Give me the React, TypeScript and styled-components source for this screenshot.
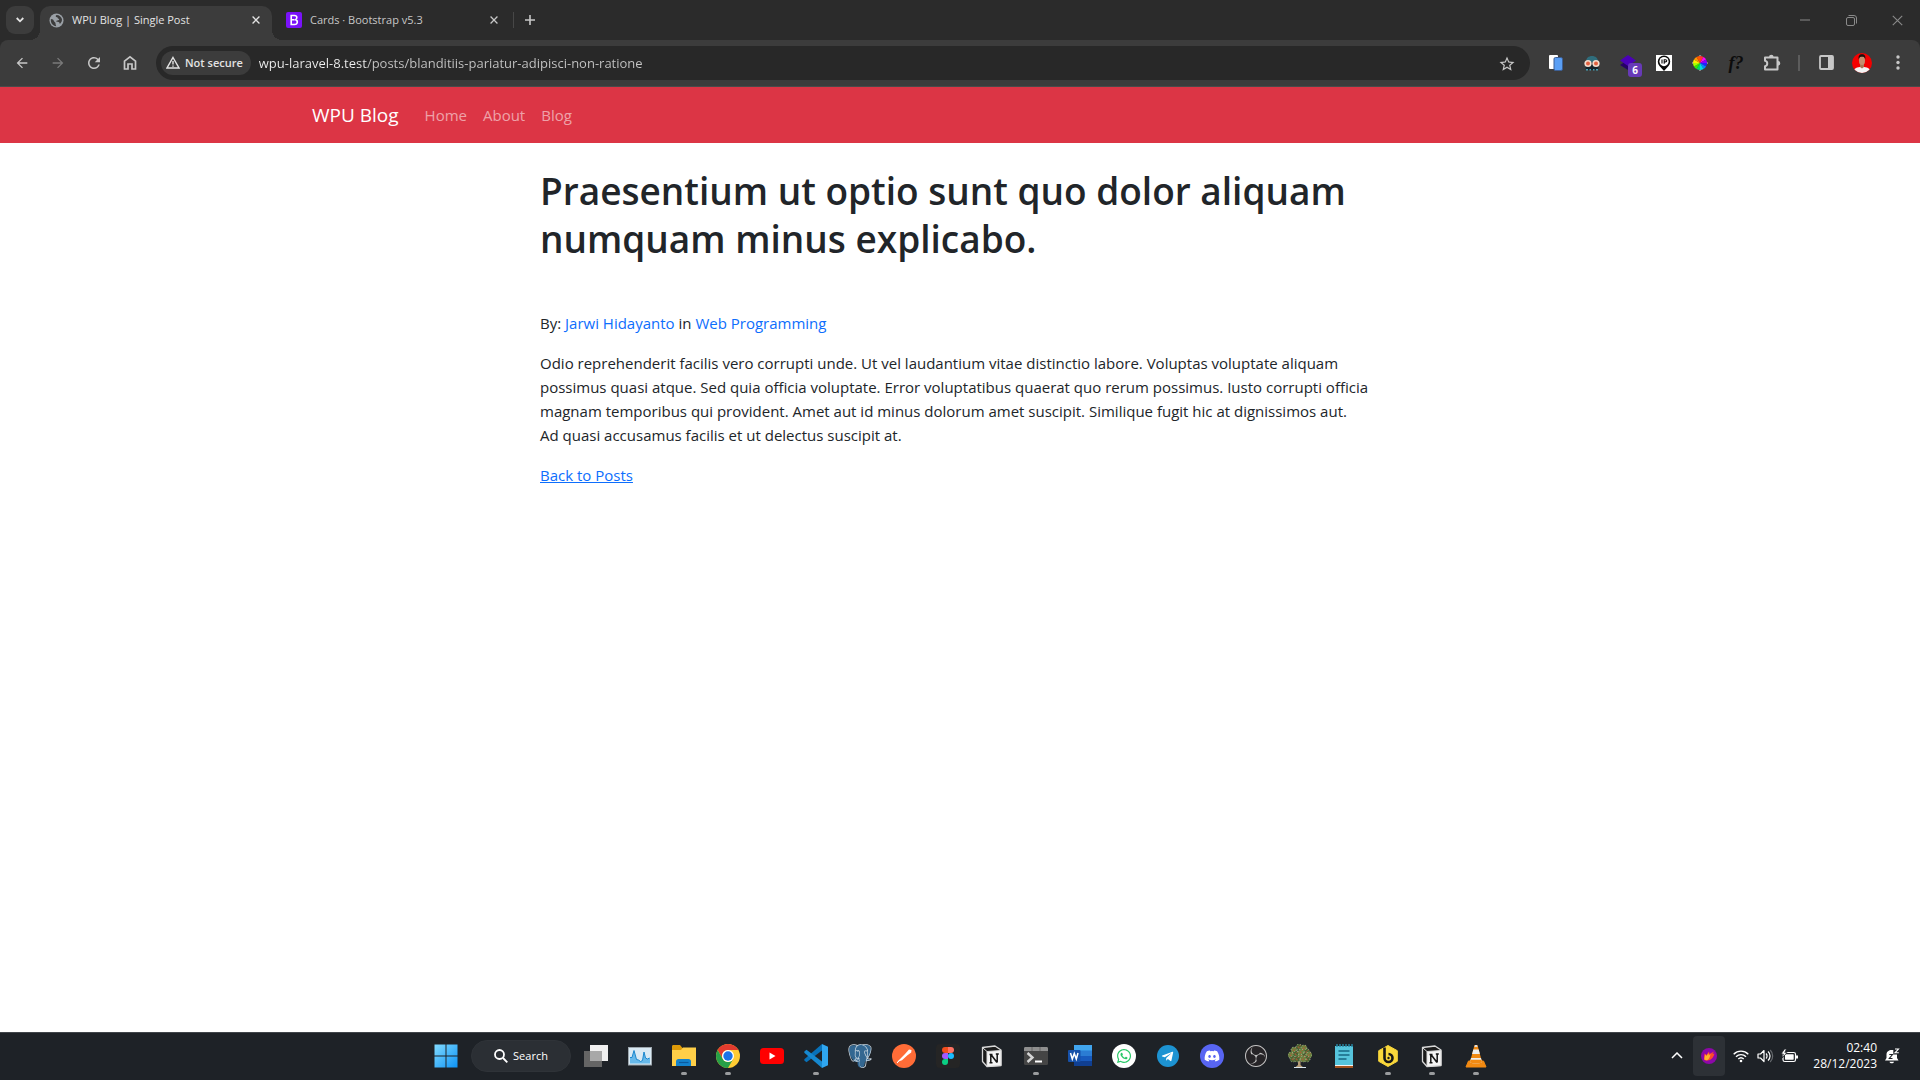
import React from "react";
import styled, { createGlobalStyle } from "styled-components";
import { SiPostgresql, SiObsstudio } from "react-icons/si";
import { FaDiscord, FaWhatsapp, FaTelegramPlane } from "react-icons/fa";
import { MdOutlineStarBorder, MdArrowBack, MdArrowForward, MdRefresh } from "react-icons/md";

const ui = `"Open Sans", "Noto Sans", sans-serif`;

const GlobalStyle = createGlobalStyle`
  *, *::before, *::after { box-sizing: border-box; }
  body { margin: 0; background: #fff; font-family: ${ui}; }
  button { font: inherit; color: inherit; border: 0; padding: 0; background: none; }
  svg { display: block; flex: none; }
`;

const Screen = styled.div`
  display: flex;
  flex-direction: column;
  min-height: 100vh;
`;

/* ---------- browser chrome ---------- */

const Browser = styled.header`
  background: #2b2b2b;
  color: #e3e3e3;
`;

const TabStrip = styled.div`
  display: flex;
  align-items: center;
  height: 40px;
  padding-left: 6px;
`;

const TabSearch = styled.button`
  display: grid;
  place-items: center;
  width: 28px;
  height: 28px;
  border-radius: 9px;
  background: #3c3c3c;
`;

const Tab = styled.div<{ $active?: boolean }>`
  position: relative;
  display: flex;
  align-items: center;
  align-self: flex-end;
  width: ${(p) => (p.$active ? 232 : 238)}px;
  height: 34px;
  margin-left: ${(p) => (p.$active ? 6 : 0)}px;
  padding: 0 8px 6px ${(p) => (p.$active ? 9 : 14)}px;
  border-radius: 10px 10px 0 0;
  background: ${(p) => (p.$active ? "#3c3c3c" : "transparent")};
  color: ${(p) => (p.$active ? "#e3e3e3" : "#c7c7c7")};
  &::before, &::after {
    content: "";
    display: ${(p) => (p.$active ? "block" : "none")};
    position: absolute;
    bottom: 0;
    width: 10px;
    height: 10px;
  }
  &::before {
    right: 100%;
    background: radial-gradient(circle at 0 0, transparent 10px, #3c3c3c 10px);
  }
  &::after {
    left: 100%;
    background: radial-gradient(circle at 100% 0, transparent 10px, #3c3c3c 10px);
  }
`;

const TabLabel = styled.button`
  display: flex;
  flex: 1;
  align-items: center;
  gap: 8px;
  font-size: 11px;
  line-height: 16px;
  white-space: nowrap;
`;

const SmallButton = styled.button`
  display: grid;
  place-items: center;
  width: 16px;
  height: 16px;
`;

const TabDivider = styled.span`
  width: 1px;
  height: 16px;
  margin: 0 8px 0 3px;
  background: #474747;
`;

const WindowControls = styled.div`
  display: flex;
  align-self: stretch;
  margin-left: auto;
  color: #8a8a8a;
`;

const WindowButton = styled.button`
  display: grid;
  place-items: center;
  width: 46px;
`;

const Toolbar = styled.div`
  display: flex;
  align-items: center;
  height: 47px;
  padding: 0 4px 1px;
  border-bottom: 1px solid #4a4a4a;
  border-radius: 8px 8px 0 0;
  background: #3c3c3c;
`;

const ToolButton = styled.button`
  position: relative;
  display: grid;
  place-items: center;
  width: 36px;
  height: 34px;
  color: #c7c7c7;
  &:disabled { color: #7a7a7a; }
`;

const Omnibox = styled.form`
  display: flex;
  flex: 1;
  align-items: center;
  gap: 8px;
  height: 34px;
  margin: 0 8px;
  padding: 0 16px 0 5px;
  border-radius: 17px;
  background: #282828;
`;

const SecurityChip = styled.button`
  display: flex;
  align-items: center;
  gap: 5px;
  height: 24px;
  padding: 0 8px 0 5px;
  border-radius: 12px;
  background: #3c3c3c;
  color: #e3e3e3;
  font-size: 11px;
  font-weight: 600;
  white-space: nowrap;
`;

const Address = styled.input`
  flex: 1;
  min-width: 0;
  height: 24px;
  padding: 0;
  border: 0;
  outline: 0;
  background: linear-gradient(to right, #f0f0f0 108px, #c7c7c7 108px);
  background-clip: text;
  -webkit-text-fill-color: transparent;
  color: #e3e3e3;
  font-family: ${ui};
  font-size: 13px;
`;

const Count = styled.span`
  position: absolute;
  right: 4px;
  bottom: 3px;
  width: 14px;
  height: 14px;
  border-radius: 3px;
  background: #673ab7;
  color: #fff;
  font-size: 10px;
  font-weight: 700;
  line-height: 14px;
  text-align: center;
`;

const FunctionMark = styled.span`
  color: #0c0c0c;
  font-family: "Liberation Serif", serif;
  font-size: 18px;
  font-style: italic;
  font-weight: 700;
  line-height: 20px;
`;

const ToolDivider = styled.span`
  width: 2px;
  height: 16px;
  margin: 0 8px;
  background: #5c5c5c;
`;

/* ---------- blog page ---------- */

const SiteNav = styled.nav`
  background: #dc3545;
`;

const Container = styled.div`
  display: flex;
  align-items: center;
  max-width: 1320px;
  height: 56px;
  margin: 0 auto;
  padding: 0 12px;
`;

const Brand = styled.a`
  margin-right: 18px;
  color: #fff;
  font-size: 19px;
  line-height: 30px;
  text-decoration: none;
`;

const NavLink = styled.a`
  padding: 8px;
  color: rgba(255, 255, 255, 0.55);
  font-size: 15px;
  line-height: 24px;
  text-decoration: none;
`;

const Article = styled.main`
  flex: 1;
  width: 100%;
  max-width: 840px;
  margin: 0 auto;
  padding-top: 24px;
  color: #212529;
  font-size: 15px;
  line-height: 24px;
`;

const Title = styled.h1`
  margin: 0 0 48px;
  font-size: 37px;
  font-weight: 600;
  line-height: 48px;
`;

const Paragraph = styled.p`
  margin: 0 0 16px;
`;

const Link = styled.a<{ $plain?: boolean }>`
  color: #0d6efd;
  text-decoration: ${(p) => (p.$plain ? "none" : "underline")};
`;

/* ---------- taskbar ---------- */

const Taskbar = styled.footer`
  display: grid;
  grid-template-columns: 1fr auto 1fr;
  align-items: center;
  height: 48px;
  padding: 0 0 2px 2px;
  border-top: 1px solid #41454a;
  background: #1e2227;
  color: #fff;
`;

const Apps = styled.div`
  display: flex;
  grid-column: 2;
  align-items: center;
`;

const AppButton = styled.button<{ $running?: boolean }>`
  position: relative;
  display: grid;
  place-items: center;
  width: 44px;
  height: 44px;
  &::after {
    content: "";
    display: ${(p) => (p.$running ? "block" : "none")};
    position: absolute;
    bottom: 3px;
    left: 19px;
    width: 6px;
    height: 3px;
    border-radius: 2px;
    background: #9a9c9e;
  }
`;

const SearchButton = styled.button`
  display: flex;
  align-items: center;
  justify-content: center;
  gap: 5px;
  width: 100px;
  height: 32px;
  margin: 0 3px;
  border: 1px solid #2f3338;
  border-radius: 16px;
  background: #2b2f34;
  font-size: 11px;
`;

const Tray = styled.div`
  display: flex;
  grid-column: 3;
  align-items: center;
  justify-content: flex-end;
  padding-right: 20px;
`;

const TrayButton = styled.button<{ $width: number; $lit?: boolean }>`
  display: grid;
  place-items: center;
  width: ${(p) => p.$width}px;
  height: 40px;
  border-radius: 4px;
  background: ${(p) => (p.$lit ? "#2d3136" : "transparent")};
`;

const Clock = styled.button`
  width: 72px;
  margin-right: 7px;
  font-size: 12px;
  line-height: 16px;
  text-align: right;
  white-space: nowrap;
`;

/* ---------- drawings ---------- */

const Cross = ({ size = 8, stroke = 1.6 }) => (
  <svg width={size} height={size} viewBox="0 0 10 10" stroke="currentColor" strokeWidth={stroke} fill="none">
    <path d="M.7 .7 9.3 9.3M9.3 .7 .7 9.3" />
  </svg>
);

const Globe = () => (
  <svg width="15" height="15" viewBox="0 0 16 16">
    <circle cx="8" cy="8" r="7.5" fill="#9aa0a6" />
    <path d="M2 6.500c2 .2 3 .8 3.200 2 .2 1 1.600 1 1.700 2.200.1 1 .2 2.400.8 3.400C4 14 1.500 10.500 2 6.500zM8 2c-1.500.8-1 2.200.6 2.400 1 .2.4 1.400 1.600 1.600 1 .1.8 1.400-.4 1.600-1.400.2-2.400.5-2 1.400.5.8 2.200.3 3 .9.7.6.1 1.600 1 1.500C13.500 10 14 8.500 13.800 6.500 13 4 11 2 8 2z" fill="#3c3c3c" />
  </svg>
);

const BootstrapLogo = () => (
  <svg width="16" height="16" viewBox="0 0 16 16">
    <rect width="16" height="16" rx="2" fill="#7a12fa" />
    <path d="M5.200 3.500h3.300c3 0 3 3.600.7 4.200 3 .4 2.800 4.800-.7 4.800H5.200zM5.200 7.700h3.500" fill="none" stroke="#fff" strokeWidth="1.600" />
  </svg>
);

const Home = () => (
  <svg width="14" height="16" viewBox="0 0 14 16" fill="none" stroke="currentColor" strokeWidth="1.700">
    <path d="M1.500 6.200 7 1.800l5.500 4.400V14H9V9H5v5H1.500z" />
  </svg>
);

const Warning = () => (
  <svg width="14" height="13" viewBox="0 0 14 13" fill="none" stroke="currentColor" strokeWidth="1.400">
    <path d="M7 1.500 13 12H1zM7 5v3.500M7 9.400v1.300" />
  </svg>
);

const Puzzle = () => (
  <svg width="18" height="18" viewBox="0 0 18 18">
    <path d="M2 3.500h12.500V15.500H2v-3.300c3-.4 3-5 0-5.400z" fill="none" stroke="currentColor" strokeWidth="2" strokeLinejoin="round" />
    <path d="M6 3a2.300 2.300 0 0 1 4.600 0zM15 7a2.300 2.300 0 0 1 0 4.600z" fill="currentColor" />
  </svg>
);

const Devices = () => (
  <svg width="14" height="16" viewBox="0 0 14 16">
    <rect x="0" y="0" width="9" height="14" rx="1" fill="#fff" />
    <rect x="5" y="2.500" width="8.500" height="13" rx="1.500" fill="#5a9ff5" stroke="#3c5f95" />
  </svg>
);

const Spy = () => (
  <svg width="16" height="16" viewBox="0 0 16 16">
    <path d="M2 7C2 3 4.500 1 8 1s6 2 6 6z" fill="#2f6d7c" />
    <path d="M1 10h14l-1 5H2z" fill="#15242b" />
    <path d="M2 14h2v1.500H2zM5.500 14H7v1.500H5.500zM9 14h1.500v1.500H9zM12 14h2v1.500h-2z" fill="#47a0b4" />
    <circle cx="4" cy="8.500" r="3.600" fill="#f3ddcf" />
    <circle cx="12" cy="8.500" r="3.600" fill="#f3ddcf" />
    <circle cx="4" cy="8.500" r="2" fill="#e2613f" />
    <circle cx="12" cy="8.500" r="2" fill="#e2613f" />
  </svg>
);

const Layers = () => (
  <svg width="18" height="16" viewBox="0 0 18 16">
    <path d="M1 10 9 5l8 5-8 5z" fill="#260066" />
    <path d="M1 5.500 9 0l8 5.500L9 11z" fill="#4b00b8" />
  </svg>
);

const PinIp = () => (
  <svg width="16" height="16" viewBox="0 0 16 16">
    <rect width="16" height="16" fill="#fff" />
    <path d="M8 16 3.500 11a6.200 6.200 0 1 1 9 0z" fill="#0a0a0a" />
    <circle cx="8" cy="6.600" r="4.600" fill="#fff" />
    <path d="M6 4.500v4M8.200 8.700V4.700h1.300c1.700 0 1.700 2.200 0 2.200H8.200" fill="none" stroke="#0a0a0a" strokeWidth="1.100" />
  </svg>
);

const wheel = ["#f33", "#f0f", "#80f", "#22f", "#08f", "#0dd", "#0d6", "#3e0", "#af0", "#fe0", "#f90", "#f50"];
const ColorWheel = () => (
  <svg width="16" height="16" viewBox="-8 -8 16 16">
    <circle r="7.400" fill="none" stroke="#aaa" strokeWidth="1" strokeDasharray="2 9.600" strokeDashoffset="1" />
    {wheel.map((fill, i) => (
      <path key={fill} d="M0 0 0-7A7 7 0 0 1 3.500-6.060z" fill={fill} transform={`rotate(${i * 30})`} />
    ))}
  </svg>
);

const SidePanel = () => (
  <svg width="15" height="15" viewBox="0 0 15 15">
    <rect x="1" y="1" width="13" height="13" rx="1" fill="none" stroke="currentColor" strokeWidth="1.800" />
    <path d="M9 1h5v13H9z" fill="currentColor" />
  </svg>
);

const Avatar = () => (
  <svg width="20" height="20" viewBox="0 0 20 20">
    <clipPath id="face"><circle cx="10" cy="10" r="10" /></clipPath>
    <g clipPath="url(#face)">
      <rect width="20" height="20" fill="#f40000" />
      <path d="M1 20c0-4 3-5.500 7-6h4c4 .5 7 2 7 6z" fill="#f4f4f4" />
      <path d="M8 10h4v4l-2 1.500L8 14z" fill="#a87554" />
      <ellipse cx="10" cy="7.500" rx="3" ry="4.600" fill="#c49070" />
      <path d="M6.800 6.500C6 3 7.500 1.200 10 1.200s4 1.800 3.200 5.300c-.6-2.300-1.200-2.700-3.200-2.700s-2.600.4-3.200 2.700z" fill="#17120f" />
    </g>
  </svg>
);

const Dots = () => (
  <svg width="4" height="15" viewBox="0 0 4 15" fill="currentColor">
    <circle cx="2" cy="2" r="1.700" /><circle cx="2" cy="7.500" r="1.700" /><circle cx="2" cy="13" r="1.700" />
  </svg>
);

const Icon = ({ children }: { children: React.ReactNode }) => (
  <svg width="24" height="24" viewBox="0 0 24 24">{children}</svg>
);

const Windows = () => (
  <Icon>
    <defs>
      <linearGradient id="win" x1="0" y1="0" x2="24" y2="24" gradientUnits="userSpaceOnUse">
        <stop stopColor="#84dcff" /><stop offset="1" stopColor="#0a91f5" />
      </linearGradient>
    </defs>
    <path d="M.5 .5h11v11H.5zM12.500 .5h11v11h-11zM.5 12.500h11v11H.5zM12.500 12.500h11v11h-11z" fill="url(#win)" />
  </Icon>
);

const TaskView = () => (
  <Icon>
    <rect x="6" y="1" width="18" height="16" fill="#f0f0f0" />
    <rect x="0" y="7" width="18" height="16" fill="#656565" />
    <path d="M6 7h12v10H6z" fill="#a8a8a8" />
  </Icon>
);

const Monitor = () => (
  <Icon>
    <rect x=".5" y="3.500" width="23" height="17.500" fill="#d9eaf4" stroke="#9da7ae" />
    <path d="M2 19.500v-6h2l2-7 2.500 9 2 .5 2 1.500 2-1 1.500-8.500 1.500 6 2 1 2-1h.5v5.500z" fill="#67b9ea" />
    <path d="M2 13.500h2l2-7 2.500 9 2 .5 2 1.500 2-1 1.500-8.500 1.500 6 2 1 2-1" fill="none" stroke="#1987ce" />
  </Icon>
);

const Folder = () => (
  <Icon>
    <path d="M0 2.500C0 1.500.6 1 1.500 1H8l2.500 3H24v5H0z" fill="#dd9a08" />
    <path d="M0 6h9l2-2.500h13v18.500H0z" fill="#ffcf48" />
    <path d="M4 22v-4.500c0-1.500 1-2.500 2.500-2.500h10c1.500 0 2.500 1 2.500 2.500V22z" fill="#1382cc" />
    <path d="M7 18.500h9.500" stroke="#0a5a9e" strokeWidth="1.200" />
  </Icon>
);

const Chrome = () => (
  <Icon>
    <circle cx="12" cy="12" r="12" fill="#fc3" />
    <path d="M1.610 6A12 12 0 0 1 22.390 6H12a6 6 0 0 0-5.200 9z" fill="#e33b2e" />
    <path d="M1.610 6A12 12 0 0 0 12 24l5.200-9A6 6 0 0 1 6.800 15z" fill="#26a047" />
    <circle cx="12" cy="12" r="6" fill="#fff" />
    <circle cx="12" cy="12" r="4.700" fill="#1a73e8" />
  </Icon>
);

const YouTube = () => (
  <Icon>
    <rect y="4" width="24" height="16" rx="3.500" fill="#f00" />
    <path d="M9.500 8.500v7l6-3.500z" fill="#fff" />
  </Icon>
);

const VsCode = () => (
  <Icon>
    <path d="m18 0 0 6.500L2.500 18.200.3 16.500v-1.200z" fill="#0871b8" />
    <path d="M18 24V17.500L2.500 5.800.3 7.500v1.200z" fill="#1688cf" />
    <path d="m18 0 6 2.700v18.600L18 24z" fill="#2fa6f0" />
  </Icon>
);

const Postgres = () => (
  <Icon>
    <path d="M1 6C1 2 4 .8 8 1.500 11 .3 14 .5 16 1c4-.8 7 1 7 4.500 0 3-1.500 6.500-3.500 9.500l2.500.5c-1 1.500-3 2-5 2-.3 3-.5 6-4 6-3 0-3.500-2.500-3.500-6-1.500.8-3 .5-4-1C3 14 1 10 1 6z" fill="#336791" />
    <SiPostgresql size={24} color="#c9d6e0" />
    <path d="M13.500 12v9" stroke="#336791" strokeWidth="3.500" strokeLinecap="round" />
  </Icon>
);

const Postman = () => (
  <Icon>
    <circle cx="12" cy="12" r="12" fill="#ff6c37" />
    <path d="m7 16 6-6 3 .8-6 5.500-5 1.700zM13 10l4-4.500 2.500.5-.3 2.500-3.400 2.500z" fill="#fff" />
    <path d="m5 19 12-12" stroke="#fff" />
  </Icon>
);

const Figma = () => (
  <Icon>
    <rect width="24" height="24" rx="4" fill="#252525" />
    <path d="M12 3H9a3 3 0 0 0 0 6h3z" fill="#f24e1e" />
    <path d="M12 3h3a3 3 0 0 1 0 6h-3z" fill="#ff7262" />
    <path d="M12 9H9a3 3 0 0 0 0 6h3z" fill="#a259ff" />
    <circle cx="15" cy="12" r="3" fill="#1abcfe" />
    <path d="M12 15H9a3 3 0 1 0 3 3z" fill="#0acf83" />
  </Icon>
);

const Notion = () => (
  <Icon>
    <path d="M2.500 3.500 15 2l6 4v15.500L7 22.500l-4.500-5z" fill="#1b1b1b" stroke="#d8d8d8" strokeWidth="1.300" strokeLinejoin="round" />
    <path d="M7 7.500 21 6.500v15l-14 1z" fill="#f5f5f5" stroke="#d8d8d8" strokeLinejoin="round" />
    <path d="m3 4 4 3.500" stroke="#d8d8d8" />
    <path d="M9.500 10.500h3M10.800 10.500v8.300M9.500 18.800h3M11 10.500l6 8M17.200 10v8.500M15.800 10h3" stroke="#151515" strokeWidth="1.500" fill="none" />
  </Icon>
);

const Terminal = () => (
  <Icon>
    <rect y="3" width="24" height="18" rx="1.500" fill="#454545" />
    <path d="M0 7V4.500C0 3.700.6 3 1.500 3h21c.9 0 1.500.7 1.500 1.500V7z" fill="#8f8f8f" />
    <path d="M8 3v4M16 3v4" stroke="#666" />
    <path d="m3.500 9 5 4.500-5 4.500" fill="none" stroke="#d5d5d5" strokeWidth="2.400" />
    <path d="M11 17.500h7" stroke="#fff" strokeWidth="2" />
  </Icon>
);

const Word = () => (
  <Icon>
    <path d="M6 1h18v6H6z" fill="#41a5ee" />
    <path d="M6 6.500h18V12H6z" fill="#2b7cd3" />
    <path d="M6 12h18v5.500H6z" fill="#185abd" />
    <path d="M6 17h18v5H6z" fill="#103f91" />
    <rect y="6" width="12.500" height="12" rx="1" fill="#1651aa" />
    <path d="m2.500 9 1.800 6L6.300 9.500 8.300 15 10 9" fill="none" stroke="#fff" strokeWidth="1.500" />
  </Icon>
);

const WhatsApp = () => (
  <Icon>
    <circle cx="12" cy="12" r="12" fill="#fff" />
    <FaWhatsapp x="4" y="4" size={16} color="#25c866" />
  </Icon>
);

const Telegram = () => (
  <Icon>
    <circle cx="12" cy="12" r="11" fill="#1d93d2" />
    <FaTelegramPlane x="5" y="6" size={13} color="#fff" />
  </Icon>
);

const Discord = () => (
  <Icon>
    <circle cx="12" cy="12" r="12" fill="#5865f2" />
    <FaDiscord x="4" y="4" size={16} color="#fff" />
  </Icon>
);

const Obs = () => (
  <Icon>
    <circle cx="12" cy="12" r="11" fill="#262427" />
    <SiObsstudio x="1" y="1" size={22} color="#c4c4c4" />
  </Icon>
);

const leaves = [[6, 6], [11, 3], [16, 4], [19, 8], [3, 11], [8, 10], [13, 8], [17, 12], [21, 11], [5, 15], [12, 13], [19, 15], [15, 15], [9, 15]];
const Tree = () => (
  <Icon>
    <path d="M10 14h2.500v7l3 2.500H7l3-2.500z" fill="#b59b76" />
    {leaves.map(([x, y], i) => (
      <g key={i}>
        <circle cx={x} cy={y} r="3" fill={i % 2 ? "#466532" : "#67833f"} stroke="#d5d1b5" strokeWidth=".7" strokeDasharray="1 2" />
        <path d={`M${x - 1.5} ${y}h1.500v1.500M${x + 1} ${y - 1}v-1`} stroke="#b25a38" fill="none" />
      </g>
    ))}
    <path d="M6 23.500h12" stroke="#dbe8ef" />
  </Icon>
);

const Notepad = () => (
  <Icon>
    <rect x="3" y="2" width="18" height="20" fill="#56c4dc" />
    <path d="M3 22h18v2H3z" fill="#a4521d" />
    <path d="M3 21.500h18" stroke="#f3f3f3" />
    <path d="M5 0v3M8 0v3M11 0v3M14 0v3M17 0v3M20 0v3" stroke="#2786a4" strokeWidth="1.400" />
    <path d="M6.500 7h11M6.500 11h11M6.500 15h8" stroke="#176582" strokeWidth="1.600" />
  </Icon>
);

const Beekeeper = () => (
  <Icon>
    <path d="m12 1.500 9.300 5.200v10.600L12 22.500l-9.300-5.200V6.700z" fill="#fad83b" stroke="#fad83b" strokeLinejoin="round" />
    <path d="M8.500 3.500v10.500a4 4 0 1 0 4-4" fill="none" stroke="#171717" strokeWidth="2.600" />
    <circle cx="12.500" cy="14" r="1.200" fill="#171717" />
  </Icon>
);

const Vlc = () => (
  <Icon>
    <path d="M4.500 17h15l2.500 6H2z" fill="#f28a12" stroke="#f28a12" strokeLinejoin="round" />
    <path d="M10.500 1h3L18 18c-2 2-10 2-12 0z" fill="#f28a12" />
    <path d="M9.300 5.500h5.400l1.200 4.500H8.100zM7 14h10l1 4c-2 2-10 2-12 0z" fill="#eee" />
    <path d="M6.600 15.800h10.800L18 18c-2 2-10 2-12 0z" fill="#f28a12" />
    <path d="M11 1h2l.6 2h-3.200z" fill="#ddd" />
  </Icon>
);

const Flame = () => (
  <svg width="16" height="16" viewBox="0 0 16 16">
    <circle cx="8" cy="8" r="8" fill="#8d08a8" />
    <path d="M3 11.500 3.500 5.500 5.500 7 8 3.500 8.500 6 13 3.500 11.500 6l2-.4c-1 4-3.500 6.900-7 6.900-1.500 0-2.900 0-3.500-1z" fill="#ff4a2c" />
    <path d="M3.300 11.500 4 6.500 5.500 8 7.500 5l.3 2.500L9.500 6C9 9.500 7.500 12.300 5.500 12.300z" fill="#ffb52b" />
  </svg>
);

const Wifi = () => (
  <svg width="16" height="14" viewBox="0 0 16 14" fill="none" stroke="#fff" strokeWidth="1.400">
    <path d="M.7 5.200a10.300 10.300 0 0 1 14.600 0M3 7.700a7 7 0 0 1 10 0M5.300 10a3.900 3.900 0 0 1 5.400 0" />
    <circle cx="8" cy="12" r="1.300" fill="#fff" stroke="none" />
  </svg>
);

const Volume = () => (
  <svg width="17" height="14" viewBox="0 0 17 14" fill="none" stroke="#fff" strokeWidth="1.200">
    <path d="M1 5v4h2.500L7 12.500v-11L3.500 5z" strokeLinejoin="round" />
    <path d="M9 4.500a3.500 3.500 0 0 1 0 5M11 2.500a6 6 0 0 1 0 9" />
    <path d="M13.200 1a8.500 8.500 0 0 1 0 12" stroke="#666a6e" />
  </svg>
);

const Battery = () => (
  <svg width="17" height="14" viewBox="0 0 17 14">
    <rect x="2" y="3.500" width="12.500" height="9" rx="1.800" fill="none" stroke="#fff" strokeWidth="1.200" />
    <rect x="4" y="5.300" width="8.700" height="5.400" rx=".6" fill="#fff" />
    <path d="M15 6.500h2v3h-2z" fill="#fff" />
    <path d="M3.500 0 0 5h2.300L1.200 9 6 3.600H3.800L5.500 0z" fill="#fff" stroke="#1e2227" strokeWidth=".8" />
  </svg>
);

const Bell = () => (
  <svg width="15" height="16" viewBox="0 0 15 16">
    <path d="M0 12.500 1.500 10V6.500C1.500 3.500 4 2 6.500 2h1.800v4.500H12V10l1.500 2.500zM4.500 13.800h4.500c-.5 2-4 2-4.500 0z" fill="#fff" />
    <path d="M4.300 6.500h3.200l-3.200 4h3.200" fill="none" stroke="#1e2227" strokeWidth="1.100" />
    <path d="M10 1h3.500L10 4.800h3.800" fill="none" stroke="#fff" strokeWidth="1.100" />
  </svg>
);

const apps: { name: string; icon: React.ReactNode; running?: boolean }[] = [
  { name: "Task View", icon: <TaskView /> },
  { name: "Resource Monitor", icon: <Monitor /> },
  { name: "File Explorer", icon: <Folder />, running: true },
  { name: "Google Chrome", icon: <Chrome />, running: true },
  { name: "YouTube", icon: <YouTube /> },
  { name: "Visual Studio Code", icon: <VsCode />, running: true },
  { name: "PostgreSQL", icon: <Postgres /> },
  { name: "Postman", icon: <Postman /> },
  { name: "Figma", icon: <Figma /> },
  { name: "Notion", icon: <Notion /> },
  { name: "Terminal", icon: <Terminal />, running: true },
  { name: "Word", icon: <Word /> },
  { name: "WhatsApp", icon: <WhatsApp /> },
  { name: "Telegram", icon: <Telegram /> },
  { name: "Discord", icon: <Discord /> },
  { name: "OBS Studio", icon: <Obs /> },
  { name: "Tree", icon: <Tree /> },
  { name: "Notepad", icon: <Notepad /> },
  { name: "Beekeeper Studio", icon: <Beekeeper />, running: true },
  { name: "Notion workspace", icon: <Notion />, running: true },
  { name: "VLC media player", icon: <Vlc />, running: true },
];

const extensions: { name: string; icon: React.ReactNode }[] = [
  { name: "Responsive viewer", icon: <Devices /> },
  { name: "Spy", icon: <Spy /> },
  { name: "Layers", icon: <><Layers /><Count>6</Count></> },
  { name: "IP address", icon: <PinIp /> },
  { name: "Color picker", icon: <ColorWheel /> },
  { name: "Font finder", icon: <FunctionMark>f?</FunctionMark> },
  { name: "Extensions", icon: <Puzzle /> },
];

export default function App() {
  return (
    <Screen>
      <GlobalStyle />
      <Browser>
        <TabStrip>
          <TabSearch aria-label="Search tabs">
            <svg width="8" height="6" viewBox="0 0 8 6" fill="none" stroke="#e3e3e3" strokeWidth="1.800"><path d="m.7 1 3.300 3.300L7.300 1" /></svg>
          </TabSearch>
          <Tab $active>
            <TabLabel><Globe />WPU Blog | Single Post</TabLabel>
            <SmallButton aria-label="Close WPU Blog"><Cross /></SmallButton>
          </Tab>
          <Tab>
            <TabLabel><BootstrapLogo />Cards · Bootstrap v5.3</TabLabel>
            <SmallButton aria-label="Close Cards"><Cross /></SmallButton>
          </Tab>
          <TabDivider />
          <SmallButton aria-label="New tab">
            <svg width="10" height="10" viewBox="0 0 10 10" stroke="#c7c7c7" strokeWidth="1.600"><path d="M5 0v10M0 5h10" /></svg>
          </SmallButton>
          <WindowControls>
            <WindowButton aria-label="Minimize">
              <svg width="10" height="2" viewBox="0 0 10 2"><path d="M0 1h10" stroke="currentColor" /></svg>
            </WindowButton>
            <WindowButton aria-label="Restore">
              <svg width="11" height="11" viewBox="0 0 11 11" fill="none" stroke="currentColor"><rect x=".5" y="2.500" width="8" height="8" rx="1.500" /><path d="M2.500 .5H8A2.500 2.500 0 0 1 10.500 3v5.500" /></svg>
            </WindowButton>
            <WindowButton aria-label="Close window"><Cross size={11} stroke={1} /></WindowButton>
          </WindowControls>
        </TabStrip>
        <Toolbar>
          <ToolButton aria-label="Back"><MdArrowBack size={16} /></ToolButton>
          <ToolButton aria-label="Forward" disabled><MdArrowForward size={16} /></ToolButton>
          <ToolButton aria-label="Reload"><MdRefresh size={18} /></ToolButton>
          <ToolButton aria-label="Home"><Home /></ToolButton>
          <Omnibox>
            <SecurityChip type="button"><Warning />Not secure</SecurityChip>
            <Address aria-label="Address" defaultValue="wpu-laravel-8.test/posts/blanditiis-pariatur-adipisci-non-ratione" />
            <SmallButton type="button" aria-label="Bookmark this page"><MdOutlineStarBorder size={18} color="#c7c7c7" /></SmallButton>
          </Omnibox>
          {extensions.map((e) => <ToolButton key={e.name} aria-label={e.name}>{e.icon}</ToolButton>)}
          <ToolDivider />
          <ToolButton aria-label="Side panel"><SidePanel /></ToolButton>
          <ToolButton aria-label="Profile"><Avatar /></ToolButton>
          <ToolButton aria-label="Menu"><Dots /></ToolButton>
        </Toolbar>
      </Browser>

      <SiteNav>
        <Container>
          <Brand href="#">WPU Blog</Brand>
          <NavLink href="#home">Home</NavLink>
          <NavLink href="#about">About</NavLink>
          <NavLink href="#blog">Blog</NavLink>
        </Container>
      </SiteNav>

      <Article>
        <Title>Praesentium ut optio sunt quo dolor aliquam numquam minus explicabo.</Title>
        <Paragraph>
          By: <Link $plain href="#author">Jarwi Hidayanto</Link> in <Link $plain href="#category">Web Programming</Link>
        </Paragraph>
        <Paragraph>
          Odio reprehenderit facilis vero corrupti unde. Ut vel laudantium vitae distinctio labore. Voluptas voluptate
          aliquam possimus quasi atque. Sed quia officia voluptate. Error voluptatibus quaerat quo rerum possimus. Iusto
          corrupti officia magnam temporibus qui provident. Amet aut id minus dolorum amet suscipit. Similique fugit hic
          at dignissimos aut. Ad&nbsp;quasi accusamus facilis et ut delectus suscipit at.
        </Paragraph>
        <Link href="#posts">Back to Posts</Link>
      </Article>

      <Taskbar>
        <Apps>
          <AppButton aria-label="Start"><Windows /></AppButton>
          <SearchButton>
            <svg width="14" height="14" viewBox="0 0 14 14" fill="none" stroke="#fff" strokeWidth="1.800"><circle cx="5.500" cy="5.500" r="4.500" /><path d="m9 9 4.300 4.300" /></svg>
            Search
          </SearchButton>
          {apps.map((a) => <AppButton key={a.name} aria-label={a.name} $running={a.running}>{a.icon}</AppButton>)}
        </Apps>
        <Tray>
          <TrayButton $width={32} aria-label="Hidden icons">
            <svg width="12" height="7" viewBox="0 0 12 7" fill="none" stroke="#fff" strokeWidth="1.500"><path d="m1 6 5-5 5 5" /></svg>
          </TrayButton>
          <TrayButton $width={32} $lit aria-label="Flame"><Flame /></TrayButton>
          <TrayButton $width={32} aria-label="Wi-Fi"><Wifi /></TrayButton>
          <TrayButton $width={16} aria-label="Volume"><Volume /></TrayButton>
          <TrayButton $width={32} aria-label="Battery"><Battery /></TrayButton>
          <Clock>02:40<br />28/12/2023</Clock>
          <TrayButton $width={16} aria-label="Notifications"><Bell /></TrayButton>
        </Tray>
      </Taskbar>
    </Screen>
  );
}
